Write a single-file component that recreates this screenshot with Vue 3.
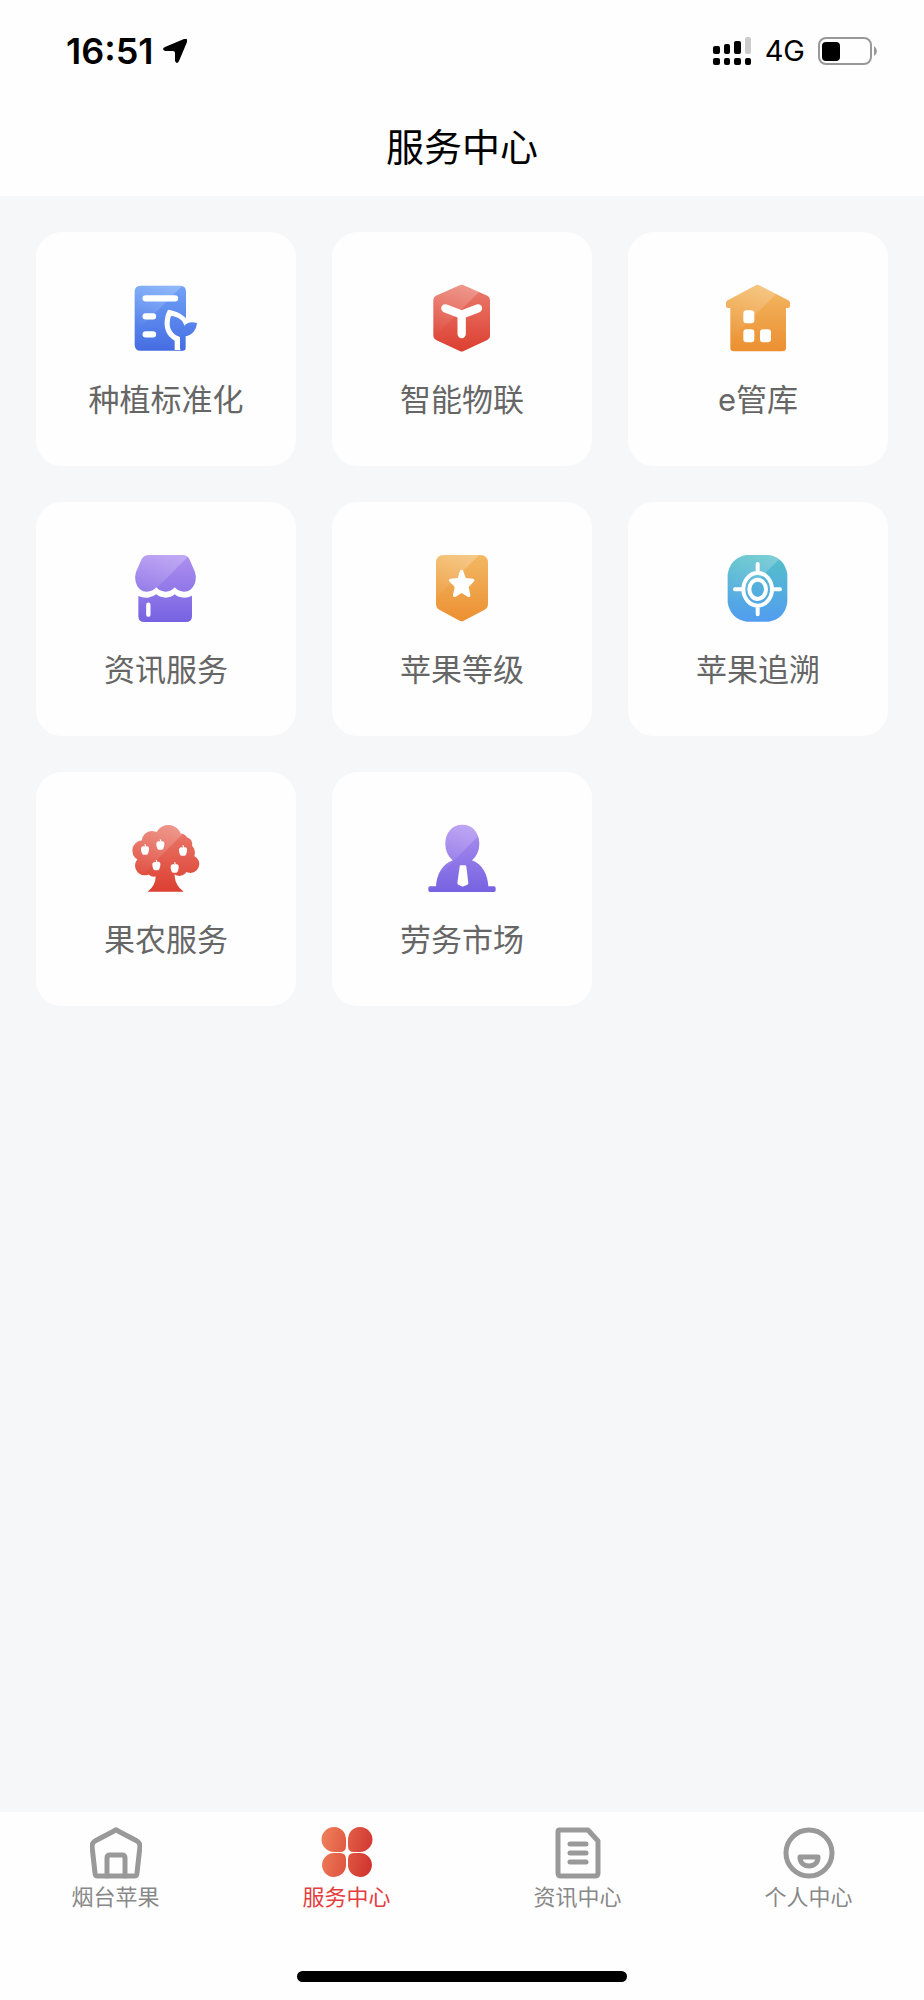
<script setup>
import { ref } from "vue";

const activeTab = ref("service");

const circle = (x, y, r) => `M${x - r} ${y}a${r} ${r} 0 1 1 ${r * 2} 0a${r} ${r} 0 1 1 ${-r * 2} 0Z`;

const apple = (x, y) =>
  `M${x} ${y - 9}l-2 -7h4l1 6c7 -2 10 2 9 10c-1 9 -4 15 -8 15h-8c-4 0 -7 -6 -8 -15c-1 -8 4 -12 12 -9Z`;

const colors = {
  blue: ["#70a3f7", "#456ce2"],
  red: ["#ea7c6e", "#dc3f31"],
  orange: ["#f2b863", "#ec8f31"],
  purple: ["#ae8ff0", "#7763e1"],
  teal: ["#55c0c8", "#529df0"]
};

// x, y - origin of the icon grid, shine - where the diagonal highlight ends
const services = [
  {
    id: "plant",
    name: "种植标准化",
    color: "blue",
    x: 30,
    y: 36,
    shine: 168,
    shape: "M62 47H180Q198 47 198 65V224Q198 242 180 242H62Q44 242 44 224V65Q44 47 62 47Z",
    cut: "M144 119C166 122 187 132 198 145L210 240H164V212C142 199 132 180 134 153Q136 132 144 119Z",
    lines: "M77 85H165M77 139H99M77 193H99",
    width: 19,
    over: "M153 138C174 140 189 150 193 167C201 157 214 154 231 159C229 181 216 195 197 199V234Q197 242 188 242Q180 242 180 234V201C160 195 149 180 149 160Q149 147 153 138Z"
  },
  {
    id: "iot",
    name: "智能物联",
    color: "red",
    x: 18,
    y: 36,
    shine: 189,
    shape: "M119 46Q125 43 131 46L202 77Q210 81 210 90V199Q210 206 202 210L131 243Q125 246 119 243L48 210Q40 206 40 199V90Q40 81 48 77Z",
    lines: "M76 115L125 134L174 115M125 134V192",
    width: 25
  },
  {
    id: "store",
    name: "e管库",
    color: "orange",
    x: 36,
    y: 36,
    shine: 198,
    shape: "M138 46Q143 43 148 46L235 91Q240 94 240 99V108Q240 114 234 114H228V234Q228 244 218 244H71Q61 244 61 234V114H54Q48 114 48 108V99Q48 94 53 91Z",
    cut: "M109 121H124Q133 121 133 130V151Q133 160 124 160H109Q100 160 100 151V130Q100 121 109 121ZM109 178H124Q133 178 133 187V208Q133 217 124 217H109Q100 217 100 208V187Q100 178 109 178ZM159 178H174Q183 178 183 187V208Q183 217 174 217H159Q150 217 150 208V187Q150 178 159 178Z"
  },
  {
    id: "news",
    name: "资讯服务",
    color: "purple",
    x: 30,
    y: 21,
    shine: 188,
    shape: "M88 30H187Q202 30 208 42L225 81Q230 96 226 110C220 131 206 140 192 140Q176 140 164 127Q153 140 137 140Q121 140 109 127Q97 140 81 140C65 140 52 130 47 110Q43 96 48 81L65 42Q72 30 88 30ZM55 153Q68 159 84 158Q98 156 109 148Q121 158 137 158Q153 158 164 148Q176 158 192 158Q205 158 216 152V213Q216 231 198 231H73Q55 231 55 213Z",
    lines: "M85 179V209",
    width: 13
  },
  {
    id: "grade",
    name: "苹果等级",
    color: "orange",
    x: 18,
    y: 21,
    shine: 168,
    shape: "M72 30H180Q204 30 204 54V176Q204 188 194 194L131 227Q125 231 119 227L58 194Q48 188 48 176V54Q48 30 72 30Z",
    cut: "M120 78Q125 70 130 78L137 99L158 101Q167 103 161 110L146 126L151 149Q152 159 143 155L125 144L107 155Q98 159 99 149L104 126L89 110Q83 103 92 101L113 99Z"
  },
  {
    id: "trace",
    name: "苹果追溯",
    color: "teal",
    x: 36,
    y: 21,
    shine: 193,
    shape: "M110 30H176C208 35 227 55 232 88V172C227 205 208 225 176 230H110C78 225 58 205 53 172V88C58 55 78 35 110 30Z",
    lines: "M143 57V82M143 184V208M75 133H97M190 133H210" + "M100 133a43 49 0 1 0 86 0a43 49 0 1 0 -86 0Z" + "M118 133a25 29 0 1 0 50 0a25 29 0 1 0 -50 0Z",
    width: 12
  },
  {
    id: "farmer",
    name: "果农服务",
    color: "red",
    x: 30,
    y: 21,
    shine: 194,
    shape:
      circle(145, 69, 39) + circle(96, 79, 31) + circle(68, 107, 31) + circle(74, 152, 29) +
      circle(101, 165, 20) + circle(177, 87, 32) + circle(197, 87, 20) + circle(197, 113, 28) +
      circle(211, 147, 27) + circle(178, 158, 25) + circle(130, 125, 55) +
      "M107 150H164V184Q166 212 191 230H83Q107 212 107 184Z",
    cut: apple(75, 104) + apple(121, 89) + apple(189, 107) + apple(109, 151) + apple(164, 158)
  },
  {
    id: "labor",
    name: "劳务市场",
    color: "purple",
    x: 33,
    y: 21,
    shine: 199,
    shape: "M142 29C173 29 193 53 193 86Q193 116 171 136C202 148 218 178 220 214H237Q242 214 242 219V226Q242 231 237 231H45Q40 231 40 226V219Q40 214 45 214H63C65 178 82 148 113 136Q91 116 91 86C91 53 111 29 142 29Z",
    cut: "M137 151H150Q153 151 154 155L160 204Q160 207 157 209L146 214Q143 215 140 214L130 209Q127 207 127 204L134 155Q134 151 137 151Z"
  }
];

const tabs = [
  { id: "home", name: "烟台苹果" },
  { id: "service", name: "服务中心" },
  { id: "news", name: "资讯中心" },
  { id: "profile", name: "个人中心" }
];
</script>

<template>
  <div class="page">
    <header class="header">
      <div class="status">
        <div class="status-left">
          <span class="time">16:51</span>
          <svg class="arrow" viewBox="0 0 24 24">
            <path d="M21 0Q25 -1 24 3L16 22Q14 26 12 22V14Q12 12 10 12H2Q-2 10 2 8Z" />
          </svg>
        </div>
        <div class="status-right">
          <svg class="signal" viewBox="0 0 39 28">
            <rect x="0" y="9" width="7" height="8" rx="2" />
            <rect x="11" y="7" width="6" height="10" rx="2" />
            <rect x="21" y="4" width="7" height="13" rx="2" />
            <rect x="32" y="0" width="6" height="17" rx="2" fill="#ccc" />
            <rect x="0" y="21" width="7" height="7" rx="2" />
            <rect x="11" y="21" width="6" height="7" rx="2" />
            <rect x="21" y="21" width="7" height="7" rx="2" />
            <rect x="32" y="21" width="6" height="7" rx="2" />
          </svg>
          <span class="network">4G</span>
          <svg class="battery" viewBox="0 0 60 28">
            <rect x="1" y="1" width="52" height="26" rx="7" fill="none" stroke="#999" stroke-width="2" />
            <rect x="4" y="5" width="18" height="19" rx="4" />
            <path d="M56 9Q59 11 59 14Q59 17 56 19Z" fill="#999" />
          </svg>
        </div>
      </div>
      <h1 class="title">服务中心</h1>
    </header>

    <main class="grid">
      <button v-for="item in services" :key="item.id" type="button" class="card">
        <svg class="card-icon" :viewBox="`${item.x} ${item.y} 216 216`">
          <defs>
            <linearGradient
              :id="`fill-${item.id}`"
              gradientUnits="userSpaceOnUse"
              :x1="item.x"
              :y1="item.y + 10"
              :x2="item.x"
              :y2="item.y + 208"
            >
              <stop offset="0" :stop-color="colors[item.color][0]" />
              <stop offset="1" :stop-color="colors[item.color][1]" />
            </linearGradient>
            <linearGradient :id="`shine-${item.id}`" x1="0.9" y1="0" x2="0.1" y2="0.8">
              <stop offset="0" stop-color="#fff" stop-opacity="0.26" />
              <stop offset="1" stop-color="#fff" stop-opacity="0" />
            </linearGradient>
            <clipPath :id="`clip-${item.id}`">
              <path :d="item.shape" />
            </clipPath>
          </defs>
          <path :d="item.shape" :fill="`url(#fill-${item.id})`" />
          <path
            :d="`M${item.x} ${item.y}h${item.shine}l${-item.shine} ${item.shine}Z`"
            :fill="`url(#shine-${item.id})`"
            :clip-path="`url(#clip-${item.id})`"
          />
          <path v-if="item.cut" :d="item.cut" fill="#fff" />
          <path v-if="item.lines" class="lines" :d="item.lines" :stroke-width="item.width" />
          <path v-if="item.over" :d="item.over" :fill="`url(#fill-${item.id})`" />
        </svg>
        <span class="card-name">{{ item.name }}</span>
      </button>
    </main>

    <footer class="footer">
      <nav class="tabs">
        <button
          v-for="tab in tabs"
          :key="tab.id"
          type="button"
          class="tab"
          :class="{ active: tab.id === activeTab }"
          @click="activeTab = tab.id"
        >
          <svg class="tab-icon" viewBox="0 0 52 52">
            <g v-if="tab.id === 'home'" class="outline">
              <path d="M24 4Q26 2 28 4L47 14Q50 16 50 19L47 46Q47 49 44 49H8Q5 49 5 46L2 19Q2 16 5 14Z" />
              <path d="M17 49V31Q17 28 20 28H32Q35 28 35 31V49" />
            </g>
            <template v-else-if="tab.id === 'service'">
              <defs>
                <linearGradient id="petals" gradientUnits="userSpaceOnUse" x1="0" y1="20" x2="52" y2="32">
                  <stop offset="0" stop-color="#ee7c58" />
                  <stop offset="1" stop-color="#d0342f" />
                </linearGradient>
              </defs>
              <path
                fill="url(#petals)"
                d="M13 0A12 12 0 0 1 25 13V19Q25 25 19 25H13A12 12 0 0 1 13 0ZM39 0A12 12 0 0 1 39 25H33Q27 25 27 19V13A12 12 0 0 1 39 0ZM13 26H19Q25 26 25 32V39A12 12 0 1 1 13 26ZM33 26H39A12 12 0 1 1 27 39V32Q27 26 33 26Z"
              />
            </template>
            <g v-else-if="tab.id === 'news'" class="outline">
              <path d="M7 3H36L46 14V46Q46 49 43 49H9Q6 49 6 46V5Q6 3 7 3Z" />
              <path d="M18 17H34M18 26H34M18 35H34" />
            </g>
            <g v-else class="outline">
              <circle cx="26" cy="26" r="23" />
              <path d="M17 30H35C35 36 31 39 26 39S17 36 17 30Z" />
            </g>
          </svg>
          <span class="tab-name">{{ tab.name }}</span>
        </button>
      </nav>
      <div class="home-bar"></div>
    </footer>
  </div>
</template>

<style>
body {
  margin: 0;
}
</style>

<style scoped>
.page {
  min-height: 100vh;
  display: flex;
  flex-direction: column;
  background: #f5f7f9;
  font-family: Inter, "Noto Sans CJK SC", sans-serif;
}

button {
  border: 0;
  padding: 0;
  margin: 0;
  font-family: inherit;
  cursor: pointer;
}

svg {
  display: block;
}

.header {
  background: #fefefe;
  padding: 29px 0 23px;
}

.status {
  display: flex;
  justify-content: space-between;
  align-items: center;
  height: 44px;
  padding: 0 46px 0 66px;
}

.status-left {
  display: flex;
  align-items: center;
  gap: 9px;
}

.time {
  font-size: 36px;
  line-height: 44px;
  font-weight: 600;
}

.arrow {
  width: 24px;
  height: 24px;
}

.status-right {
  display: flex;
  align-items: center;
  gap: 13px;
}

.signal {
  width: 39px;
  height: 28px;
}

.network {
  font-size: 29px;
  line-height: 44px;
  font-weight: 400;
}

.battery {
  width: 60px;
  height: 28px;
}

.title {
  margin: 48px 0 0;
  text-align: center;
  font-size: 38px;
  line-height: 52px;
  font-weight: 400;
  color: #000;
}

.grid {
  flex: 1;
  display: grid;
  grid-template-columns: repeat(3, 1fr);
  align-content: start;
  gap: 36px;
  padding: 36px;
}

.card {
  display: flex;
  flex-direction: column;
  align-items: center;
  gap: 25px;
  padding: 50px 0 45px;
  border-radius: 26px;
  background: #fefefe;
}

.card-icon {
  width: 72px;
  height: 72px;
}

.lines {
  fill: none;
  stroke: #fff;
  stroke-linecap: round;
  stroke-linejoin: round;
}

.card-name {
  font-size: 31px;
  line-height: 42px;
  color: #666;
}

.footer {
  display: flex;
  flex-direction: column;
  align-items: center;
  background: #fefefe;
  padding: 15px 0 18px;
}

.tabs {
  display: flex;
  width: 100%;
}

.tab {
  flex: 1;
  display: flex;
  flex-direction: column;
  align-items: center;
  gap: 2px;
  background: none;
  color: #888;
}

.tab.active {
  color: #e43d3d;
}

.tab-icon {
  width: 52px;
  height: 52px;
}

.outline {
  fill: none;
  stroke: #999;
  stroke-width: 5;
  stroke-linecap: round;
  stroke-linejoin: round;
}

.tab-name {
  font-size: 22px;
  line-height: 32px;
}

.home-bar {
  width: 330px;
  height: 11px;
  margin-top: 58px;
  border-radius: 6px;
  background: #000;
}
</style>
